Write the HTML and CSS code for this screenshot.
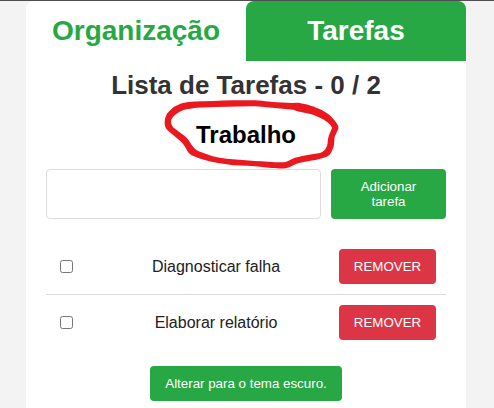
FILE: index.html
```html
<!DOCTYPE html>
<html lang="pt-BR">
<head>
<meta charset="utf-8">
<title>Lista de Tarefas</title>
<link rel="stylesheet" href="styles.css">
</head>
<body>
<main class="card">
  <nav class="tabs">
    <a class="tab">Organização</a>
    <a class="tab tab-active">Tarefas</a>
  </nav>
  <section class="content">
    <h1 class="title">Lista de Tarefas - 0 / 2</h1>
    <div class="category">
      <h2 class="category-name">Trabalho</h2>
      <svg class="marker" viewBox="0 0 600 255" aria-hidden="true">
        <path fill-rule="evenodd" d="M44 95C45 82 48 73 56 65C66 54 76 47 90 42C112 34 138 35 160 34C210 32 255 30 300 31C340 31 355 36 380 37L425 39L445 38C473 43 493 49 515 60C537 71 551 85 560 100Q567 108 565 116L554 140C552 155 554 166 548 177C544 188 540 196 530 200C500 212 470 212 445 220C430 224 425 231 410 234C395 237 385 235 365 234L315 229C285 226 255 228 230 223C195 218 160 211 130 198C114 191 111 180 105 170Q99 160 90 152L55 123Q42 111 44 95ZM63 95C63 86 70 77 80 71C92 61 105 58 120 56C145 51 170 53 200 51L300 49C340 49 350 53 375 54L430 59C445 66 465 67 485 73C503 80 518 86 530 95Q545 106 546 114C543 124 536 134 534 147C532 158 534 164 529 172C525 181 520 186 510 189C485 193 460 196 435 203C420 209 412 217 395 217C370 217 340 214 315 213L230 206C202 203 174 195 150 185C137 181 132 174 125 165C118 155 115 147 105 139L75 116Q64 109 63 95Z"/>
      </svg>
    </div>
    <form class="add-form">
      <input class="task-input" type="text" aria-label="Nova tarefa">
      <button class="btn btn-add" type="button">Adicionar tarefa</button>
    </form>
    <ul class="tasks">
      <li class="task"><input class="check" type="checkbox" aria-label="Concluir"><span>Diagnosticar falha</span><button class="btn btn-remove" type="button">REMOVER</button></li>
      <li class="task"><input class="check" type="checkbox" aria-label="Concluir"><span>Elaborar relatório</span><button class="btn btn-remove" type="button">REMOVER</button></li>
    </ul>
    <button class="btn btn-theme" type="button">Alterar para o tema escuro.</button>
  </section>
</main>
</body>
</html>
```
FILE: styles.css
```css
* { box-sizing: border-box; }
body {
  margin: 0;
  height: 408px;
  border-top: 1px solid #514e50;
  background: #f3f3f3;
  color: #212121;
  font: 16px "Liberation Sans", Arial, sans-serif;
}
.card {
  width: 440px;
  height: 407px;
  margin-left: 26px;
  background: #fff;
  border-radius: 8px 8px 0 0;
}
.tabs { display: flex; height: 60px; }
.tab {
  flex: 1;
  border-radius: 8px 8px 0 0;
  text-align: center;
  font-size: 28px;
  font-weight: bold;
  line-height: 60px;
  color: #28a745;
}
.tab-active { background: #28a745; color: #fff; }
.content {
  display: flex;
  flex-direction: column;
  padding: 9px 20px 0;
}
.title {
  margin: 0;
  text-align: center;
  font-size: 26px;
  line-height: 30px;
  color: #333;
}
.category { position: relative; margin-top: 21px; }
.category-name {
  margin: 0;
  text-align: center;
  font-size: 24px;
  line-height: 28px;
  color: #000;
}
.marker {
  position: absolute;
  left: 104px;
  top: -31px;
  width: 200px;
  height: 85px;
  fill: #e9191f;
  z-index: 1;
}
.add-form { display: flex; gap: 10px; height: 50px; margin-top: 20px; }
.task-input {
  width: 275px;
  border: 1px solid #ddd;
  border-radius: 4px;
  background: #fff;
}
.btn {
  border: 0;
  border-radius: 4px;
  background: #28a745;
  color: #fff;
  font: 13.333px "Liberation Sans", Arial, sans-serif;
}
.btn-add { width: 115px; padding: 10px 20px; }
.tasks { list-style: none; margin: 20px 0 0; padding: 0; }
.task {
  display: grid;
  grid-template-columns: 47px 1fr 97px;
  align-items: center;
  height: 56px;
  padding: 10px 10px 10px 0;
  border-bottom: 1px solid #ddd;
  text-align: center;
}
.task:last-child { height: 55px; border-bottom: 0; }
.check { width: 13px; height: 13px; margin: 0 0 0 14px; }
.btn-remove { height: 35px; background: #dc3545; }
.btn-theme { width: 192px; height: 35px; margin: 16px auto 0; padding: 0; }
```
